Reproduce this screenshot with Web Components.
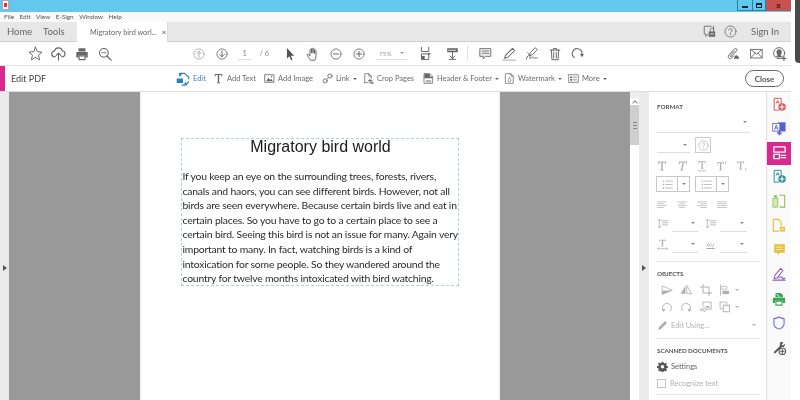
<!DOCTYPE html>
<html lang="en">
<head>
<meta charset="utf-8">
<title>Edit PDF</title>
<style>
html,body{margin:0;padding:0;background:#fff;overflow:hidden;width:800px;height:400px}
body{font-family:Lato,"Open Sans",sans-serif;color:#555}
</style>
</head>
<body>
<acro-app>
  <title-bar></title-bar>
  <menu-bar></menu-bar>
  <tab-bar></tab-bar>
  <main-toolbar></main-toolbar>
  <edit-bar></edit-bar>
  <work-area>
    <doc-view>
      <doc-page>
        <span slot="title">Migratory bird world</span>
        <span>If you keep an eye on the surrounding trees, forests, rivers,</span>
        <span>canals and haors, you can see different birds. However, not all</span>
        <span>birds are seen everywhere. Because certain birds live and eat in</span>
        <span>certain places. So you have to go to a certain place to see a</span>
        <span>certain bird. Seeing this bird is not an issue for many. Again very</span>
        <span>important to many. In fact, watching birds is a kind of</span>
        <span>intoxication for some people. So they wandered around the</span>
        <span>country for twelve months intoxicated with bird watching.</span>
      </doc-page>
    </doc-view>
    <format-panel></format-panel>
    <tool-rail></tool-rail>
  </work-area>
</acro-app>
<script>
const I = {
 star:'<path fill="none" stroke="currentColor" d="M8 1.200l2 4.800 5 .5-3.800 3.300 1.200 5L8 12.100l-4.400 2.700 1.200-5L1 6.500 6 6z"/>',
 upload:'<path fill="none" stroke="currentColor" stroke-width="1.200" d="M4.800 11.500H4a3 3 0 0 1-.4-6A4.500 4.500 0 0 1 12.200 5a3.300 3.300 0 0 1 0 6.500h-1M8 15V7.500M5.500 10 8 7.500l2.500 2.500"/>',
 print:'<path fill="currentColor" d="M4 1.500h8V5H4zM1.500 5.800h13v6.200H12V9.500H4V12H1.500z"/><path fill="none" stroke="currentColor" stroke-width="1.300" d="M4.600 10.200h6.800v4.200H4.600z"/>',
 search:'<circle cx="6.700" cy="6.700" r="5" fill="none" stroke="currentColor" stroke-width="1.200"/><path stroke="currentColor" stroke-width="1.500" d="M10.300 10.300l4.700 4.700"/><path stroke="currentColor" stroke-dasharray="1 1" d="M4.500 6.500h4.500"/>',
 up:'<circle cx="8" cy="8" r="6.800" fill="none" stroke="currentColor" stroke-width="1.100"/><path fill="none" stroke="currentColor" stroke-width="1.300" d="M8 12.200V4.500M5 7.300 8 4.300l3 3"/>',
 down:'<circle cx="8" cy="8" r="6.800" fill="none" stroke="currentColor" stroke-width="1.100"/><path fill="none" stroke="currentColor" stroke-width="1.300" d="M8 3.800v7.700M5 8.700l3 3 3-3"/>',
 pointer:'<path fill="currentColor" d="M4.500 1v12.500l2.800-2.800 1.900 4.300 1.700-.8-1.900-4.200h3.800z"/>',
 hand:'<path fill="none" stroke="currentColor" stroke-width="1.100" d="M5 14.800c-1-1.300-3-4-3.600-5.500-.4-1 1-1.600 1.700-.7l1.400 1.600V3.500c0-1.200 1.700-1.200 1.700 0V7 2.200c0-1.200 1.800-1.200 1.800 0V7 2.800c0-1.200 1.800-1.200 1.800 0v4.700V4.500c0-1.100 1.700-1.100 1.700 0V10c0 2-.5 3.500-1.300 4.800z"/>',
 minus:'<circle cx="8" cy="8" r="6.800" fill="none" stroke="currentColor" stroke-width="1.100"/><path stroke="currentColor" stroke-width="1.300" d="M4.500 8h7"/>',
 plus:'<circle cx="8" cy="8" r="6.800" fill="none" stroke="currentColor" stroke-width="1.100"/><path stroke="currentColor" stroke-width="1.300" d="M4.500 8h7M8 4.500v7"/>',
 fit:'<path fill="none" stroke="currentColor" stroke-width="1.200" d="M3 .5v5h9v-5M3 15V8.500h9V15z"/><path fill="currentColor" d="M3 11h4v4H3z"/>',
 scroll:'<path fill="currentColor" d="M1.500 1.500h13v5h-13z"/><path stroke="#fff" stroke-dasharray="1 1" d="M3 4h10"/><path fill="none" stroke="currentColor" stroke-width="1.200" d="M8 6.500v7.500M5 11l3 3 3-3M4 15.200h8"/>',
 comment:'<path fill="#eee" stroke="currentColor" stroke-width="1.100" d="M1.500 2h13v9.500H8L5.200 14.500v-3H1.500z"/><path stroke="currentColor" d="M4 5h8M4 7.800h8"/>',
 highlight:'<path fill="none" stroke="currentColor" stroke-width="1.200" d="M12 1.500l2.500 2.500L6.500 12 3 12.800 4 9.500z"/><path stroke="#bbb" stroke-width="1.600" d="M1 15h14"/>',
 sign:'<path fill="none" stroke="currentColor" stroke-width="1.100" d="M12 1l2 2-6 6-3 1 1-3zM1.500 14c1-4 3.500-6 4-4.500s-1 4 .5 3.500 1.500-2 2.500-1.500 1 1.500 5.500 1"/><path stroke="currentColor" d="M3 6.500l3 3"/>',
 trash:'<path fill="none" stroke="currentColor" stroke-width="1.100" d="M2.500 3.500h11M6 3.500V1.800h4v1.700M3.800 3.500l.7 11h7l.7-11M6.500 6v6.500M9.500 6v6.500"/>',
 rotate:'<path fill="none" stroke="currentColor" stroke-width="1.300" d="M4.200 13A6 6 0 1 1 13.500 9"/><path fill="currentColor" d="M11 8.500h5L13.500 12.500z"/>',
 attach:'<path fill="none" stroke="currentColor" stroke-width="1.200" d="M3 9l6-6.500c2-2 4.500.5 2.600 2.500L5.500 11.500c-1 1-2.400-.4-1.400-1.500l5-5M1.800 10.500c-1.500 3 1.800 5 3.700 3.200L8 11"/><path fill="currentColor" d="M8.500 14.500c0-2 1.500-4.500 3-4.500s3.500 2.500 3.500 4.500z"/>',
 mail:'<path fill="none" stroke="currentColor" stroke-width="1.100" d="M1 3h14v10.500H1zM1 3l7 5.800L15 3M1 13.500l5.200-6M15 13.500l-5.200-6"/>',
 user:'<circle cx="7" cy="7" r="6.300" fill="none" stroke="currentColor" stroke-width="1.100"/><path fill="currentColor" d="M7 2.500c2 0 3 1.300 3 3.200s-.8 3-1.500 3.600c.6.500 1.600.8 2.200 1.200A6 6 0 0 1 3.200 10.500c.6-.4 1.700-.7 2.300-1.200C4.800 8.700 4 7.600 4 5.700s1-3.200 3-3.200z"/><path stroke="currentColor" stroke-width="1.300" d="M12.500 11v4.500M10.300 13.200h4.500"/>',
 feedback:'<path fill="none" stroke="currentColor" stroke-width="1.100" d="M10 1.500H1.500V11h2v3L6 11.500M13 7V1.500"/><path fill="currentColor" d="M7 8h8v6.500H7z"/><path fill="none" stroke="currentColor" d="M9 8V5.800a2 2 0 0 1 4 0V8"/><path stroke="#e8e8e9" d="M9 11h4"/>',
 help:'<circle cx="8" cy="8" r="6.800" fill="none" stroke="currentColor" stroke-width="1"/><path fill="none" stroke="currentColor" stroke-width="1.100" d="M6 6.300a2 2 0 1 1 3 1.800C8.300 8.600 8 9 8 10"/><circle cx="8" cy="11.700" r=".7" fill="currentColor"/>',
 editb:'<path fill="none" stroke="currentColor" stroke-width="1.300" d="M5 1.500h5l4.500 4.500v2M14.500 11l-3 4H7"/><path fill="currentColor" d="M.8 7.500h7.200v5H.8zM3.500 .5 7 3 3.500 5.500zM8.500 14l3-3 1 3z"/>',
 textT:'<path fill="currentColor" d="M2.500 1.500h11v3.500h-1L12 3H9v10.500l1.500.5v.8h-5V14l1.500-.5V3H4l-.5 2h-1z"/>',
 image:'<path fill="none" stroke="currentColor" stroke-width="1.200" d="M1.500 2.500h13v11h-13z"/><path fill="currentColor" d="M3 12l3.500-5 2.500 3 1.500-1.500L13 12z"/><circle cx="11" cy="5.300" r="1.100" fill="currentColor"/>',
 link:'<circle cx="4.500" cy="11.500" r="3" fill="none" stroke="currentColor" stroke-width="1.300"/><circle cx="11.500" cy="4.500" r="3" fill="none" stroke="currentColor" stroke-width="1.300"/><path stroke="currentColor" stroke-width="1.300" d="M6.500 9.500l3-3"/>',
 crop:'<path fill="none" stroke="currentColor" stroke-width="1.100" d="M2.500 14V1h6l3.500 3.500V8M8.500 1v3.500H12M2.500 14h5"/><path fill="none" stroke="currentColor" stroke-width="1.300" d="M10 9v5.500h5M8 11h5.200v5"/>',
 header:'<path fill="none" stroke="currentColor" stroke-width="1.100" d="M2 1h8l4 4v10H2z"/><path fill="currentColor" d="M2 1h8v4h4v2.500H2z"/><path fill="currentColor" d="M4 10h8v1H4zM4 12.500h8v1H4z"/>',
 water:'<path fill="none" stroke="currentColor" stroke-width="1.100" d="M2.500 1h7.500l3.500 3.500V15h-11zM10 1v3.500h3.500"/><path fill="none" stroke="currentColor" d="M8 7c1.500 2 2 3 2 3.800a2 2 0 0 1-4 0C6 10 6.500 9 8 7z"/>',
 more:'<path fill="none" stroke="currentColor" stroke-width="1.100" d="M1 2.500h14v11H1z"/><path fill="currentColor" d="M3 5h3v2.300H3zM3 8.800h3v2.300H3zM7.500 5.500H13v1H7.500zM7.500 9.500H13v1H7.500z"/>',
 T:'<path fill="currentColor" d="M2.500 2h11v3.500h-.8L12 3.200H9v9.600l1.500.5v.7h-5v-.7l1.500-.5V3.200H4l-.7 2.300h-.8z"/>',
 Ti:'<path fill="currentColor" d="M4 2h10.500v3.500h-.8l-.2-2.300h-3l-2 9.600 1.500.5-.2.700h-5l.2-.7 1.700-.5 2-9.600H5.700l-1.200 2.300h-.8z"/>',
 Tu:'<path fill="currentColor" d="M3 1.500h10v3h-.7l-.6-2h-2.700v8.300l1.300.4v.6H6v-.6l1.300-.4V2.500H4.500l-.7 2H3zM2.500 14h11v1h-11z"/>',
 Ts:'<path fill="currentColor" d="M1.500 3h9v3h-.7L9.200 4H7v8.600l1.300.4v.6H4v-.6l1.300-.4V4H3L2.300 6h-.8zM12.500 1.500h1v4.500h-1z"/>',
 Tb:'<path fill="currentColor" d="M1.500 2h9v3h-.7L9.200 3H7v8.600l1.300.4v.6H4V12l1.300-.4V3H3l-.7 2h-.8zM12.500 10h1v4.500h-1z"/>',
 list:'<path fill="currentColor" d="M1 2h2v2H1zM1 7h2v2H1zM1 12h2v2H1z"/><path stroke="currentColor" stroke-width="1.200" d="M5 3h10M5 8h10M5 13h10"/>',
 al:'<path stroke="currentColor" stroke-width="1.100" d="M1 3h14M1 6h9M1 9h14M1 12h9"/>',
 ac:'<path stroke="currentColor" stroke-width="1.100" d="M1 3h14M4 6h8M1 9h14M4 12h8"/>',
 ar:'<path stroke="currentColor" stroke-width="1.100" d="M1 3h14M6 6h9M1 9h14M6 12h9"/>',
 aj:'<path stroke="currentColor" stroke-width="1.100" d="M1 3h14M1 6h14M1 9h14M1 12h14"/>',
 lsp:'<path fill="none" stroke="currentColor" stroke-width="1.100" d="M3.500 2v12M1.500 4l2-2.200L5.500 4M1.500 12l2 2.200 2-2.200"/><path stroke="currentColor" stroke-width="1.200" d="M7.500 4h8M7.500 7h8M7.500 10h8"/>',
 tw:'<path fill="currentColor" d="M3 1h10v2.500h-.7L12 2H9v8l1 .4v.6H6v-.6l1-.4V2H4l-.3 1.500H3z"/><path fill="none" stroke="currentColor" d="M1 14h14M2.500 12.500 1 14l1.500 1.500M13.500 12.500 15 14l-1.500 1.500"/>',
 flipH:'<path fill="none" stroke="currentColor" stroke-width="1.100" d="M1.500 3v11l13-5.500z"/><path fill="currentColor" d="M1.500 8.500h13L1.500 14z"/>',
 flipV:'<path fill="currentColor" d="M7.300 2v11H1z"/><path fill="none" stroke="currentColor" stroke-width="1.100" d="M9 2.500v10.500h6z"/>',
 cropo:'<path fill="none" stroke="currentColor" stroke-width="1.300" d="M4 .5V12h11.500M.5 4H12v11.500"/>',
 alignO:'<path stroke="currentColor" stroke-width="1.100" d="M2 1v14"/><path fill="none" stroke="currentColor" d="M4.500 3h6v4h-6z"/><path fill="currentColor" d="M4.500 9h9v4.500h-9z"/>',
 rotL:'<path fill="none" stroke="currentColor" stroke-width="1.200" d="M3.500 13A6 6 0 1 1 12.500 13"/><path fill="currentColor" d="M1 10.500h5L3.500 14.500z"/>',
 rotR:'<path fill="none" stroke="currentColor" stroke-width="1.200" d="M3.500 13A6 6 0 1 1 12.500 13"/><path fill="currentColor" d="M10 10.500h5L12.500 14.500z"/>',
 replace:'<path fill="none" stroke="currentColor" stroke-width="1.100" d="M4 1.500h11v9.500H8M4 1.500V7M1 10.500h4.500v-2l3 3-3 3v-2H1z"/><path fill="currentColor" d="M7 9l2.500-3.500 1.500 2 1-1L14 9z"/>',
 arr:'<path fill="none" stroke="currentColor" stroke-width="1.100" d="M1.500 1.500h9v3M1.500 1.500v9h3"/><path fill="currentColor" d="M5 5h9.500v10H5z"/><path fill="#fff" d="M6.300 6.300h7v7.400h-7z"/>',
 pencil:'<path fill="currentColor" d="M11.500 1.500l3 3L6 13l-4.500 1.500L3 10z"/>',
 gear:'<path fill="currentColor" fill-rule="evenodd" d="M6.700 1h2.600l.3 2 1.400.6 1.700-1.200 1.800 1.800-1.200 1.700.6 1.400 2 .3v2.600l-2 .3-.6 1.400 1.200 1.700-1.800 1.800-1.700-1.200-1.400.6-.3 2H6.700l-.3-2-1.400-.6-1.700 1.200-1.800-1.800 1.200-1.700-.6-1.400-2-.3V7.400l2-.3.6-1.400-1.200-1.700 1.800-1.800 1.700 1.200 1.400-.6zM8 5.800a2.500 2.500 0 1 0 0 5 2.500 2.500 0 0 0 0-5z"/>',
 r1:'<path fill="none" stroke="currentColor" stroke-width="1.100" d="M10.500 7.500V1.500h-8V15h5"/><path fill="none" stroke="currentColor" d="M5 7l1.500-3L8 7M5.500 6h2"/><circle cx="11.500" cy="11.500" r="4.300" fill="currentColor"/><path stroke="#fff" stroke-width="1.200" d="M9 11.500h5M11.500 9v5"/>',
 r2:'<path fill="currentColor" d="M7 1.500h8.500v10.500H7z"/><path fill="#fff" stroke="currentColor" d="M.8 3h8.200v8.500H.8z"/><path fill="none" stroke="currentColor" d="M3 9.500l1.900-5 1.900 5M3.700 8h2.500"/><path stroke="currentColor" stroke-width="1.500" d="M8.500 11v4M6.500 13.500l2 2 2-2" fill="none"/>',
 r3:'<path fill="none" stroke="currentColor" stroke-width="1.400" d="M2 2h12v5.500H2zM2 10h6v4.500H2z"/><path stroke="currentColor" stroke-width="1.400" d="M10 11h4.500M10 13.500h4.500"/>',
 r5:'<path fill="#d5eab5" stroke="currentColor" d="M1.500 5h5v10h-5z"/><path fill="none" stroke="currentColor" stroke-width="1.200" d="M9 1.500h5.500V15H9"/><path fill="currentColor" d="M2 1.500h4v2.500H2z"/>',
 r6:'<path fill="none" stroke="currentColor" stroke-width="1.300" d="M10.500 8.500V4.500L7.500 1.500h-6V15h6"/><path fill="currentColor" d="M9 10h6v5.500H9z"/><path stroke="#fff" d="M10.500 12.700h3"/>',
 r7:'<path fill="currentColor" d="M1.500 1.500h13v10.500H8.500L5.500 15v-3h-4z"/><path stroke="#fff" stroke-width=".8" d="M4 5h8M4 8h8"/>',
 r8:'<path fill="none" stroke="currentColor" stroke-width="1.200" d="M10 1.500l2.500 2.500-6.500 8.500-3.500.5.700-3.500zM1 15h14M8 12.500c2-1.500 3.500-2 3.500-.5s1 1.500 3 1"/>',
 r9:'<path fill="currentColor" d="M4 1h6l2.500 2.500V6H4zM1 6.500h14v6h-2.500V10h-9v2.500H1z"/><path fill="none" stroke="currentColor" stroke-width="1.300" d="M4.500 10.500h7v4.500h-7z"/><path stroke="#fff" d="M5.500 2.500l3 3"/>',
 r10:'<path fill="none" stroke="currentColor" stroke-width="1.200" d="M8 1.200c2 1.200 3.800 1.700 5.800 1.800v5.500c0 3-2.500 5.300-5.800 6.500-3.300-1.200-5.800-3.500-5.800-6.500V3c2-.1 3.800-.6 5.800-1.800z"/>',
 r11:'<path fill="currentColor" d="M10 1.200c1.500-.3 2.500 0 3 .5l-2 2 .5 1 1 .4 2-2c.4 1 .2 2.300-.8 3.100-.8.600-1.500.7-2.200.5L4 13.800c-1 1-2.600-.5-1.600-1.600L9.200 5.600c-.4-1.700-.3-3.600.8-4.400z"/><circle cx="11.800" cy="11.800" r="3.700" fill="#fafafa" stroke="currentColor" stroke-width="1.200"/><path stroke="currentColor" stroke-width="1.200" d="M9.800 11.800h4M11.800 9.800v4"/>'
};
const sheet = (s)=>`<style>${s}</style>`;
function def(name, css, html){
  customElements.define(name, class extends HTMLElement{
    connectedCallback(){
      if(this.shadowRoot) return;
      const r=this.attachShadow({mode:'open'});
      r.innerHTML=sheet(css)+(typeof html==='function'?html(this):html);
    }
  });
}
const caretCss = `.c{display:inline-block;width:0;height:0;border:2px solid transparent;border-top:2.500px solid currentColor;border-bottom:0;flex:none}`;

def('a-icon',`:host{display:inline-flex;flex:none;align-items:center;justify-content:center;line-height:0}svg{display:block}`,
 el=>{const s=el.getAttribute('size')||16;return `<svg width="${s}" height="${s}" viewBox="0 0 16 16" stroke-linecap="round" stroke-linejoin="round">${I[el.getAttribute('name')]||''}</svg>`});

def('acro-app',`:host{display:flex;flex-direction:column;width:800px;height:400px;position:relative;overflow:hidden;background:#fff;filter:blur(.3px)}
 .strip{position:absolute;right:0;top:0;width:5px;height:63px;background:#4a4a4a;border-bottom-left-radius:4px}
 ::slotted(*){width:791px}`,`<slot></slot><div class="strip"></div>`);

def('title-bar',`:host{display:flex;height:12px;background:#62c8ec;align-items:flex-start;justify-content:space-between}
 .logo{width:7px;height:10px;margin-left:2px;background:#fff;border:1px solid #c9a0a0;box-sizing:border-box;display:flex;align-items:center;justify-content:center}
 .logo i{width:3px;height:4px;background:#d23a3a;display:block}
 .b{display:flex;height:11px}
 .b span{display:flex;align-items:center;justify-content:center;box-sizing:border-box;border:1px solid #2c7fa6;border-top:0;height:11px}
 .min{width:16px}.min i{width:6px;height:2px;background:#123;margin-top:4px}
 .max{width:13px;border-left:0!important}.max i{width:6px;height:5px;border:1.500px solid #123;border-top-width:2px;box-sizing:border-box;display:block}
 .x{width:25px;background:#c75050;border:0!important;color:#3a1010;font:700 8px "Liberation Sans",sans-serif}`,
 `<div class="logo"><i></i></div><div class="b"><span class="min"><i></i></span><span class="max"><i></i></span><span class="x">x</span></div>`);

def('menu-bar',`:host{display:flex;height:10px;background:#f9f9fa;font:6.400px/10px Lato,sans-serif;color:#555;padding-left:4px;gap:5.500px;width:787px!important}
 span{flex:none}`,`<span>File</span><span>Edit</span><span>View</span><span>E-Sign</span><span>Window</span><span>Help</span>`);

def('tab-bar',`:host{display:flex;height:19px;background:#e7e7e8;align-items:center;font:9.500px Lato,sans-serif;color:#666;border-bottom:1px solid #d0d0d0}
 .h{margin-left:7px;width:36px}.t{width:34px}
 .tab{align-self:stretch;height:20px;width:91px;background:#fff;display:flex;align-items:center;padding-left:13px;box-sizing:border-box;font-size:7.300px;color:#666;white-space:nowrap;border-right:1px solid #ddd}
 .tab b{font-weight:400;margin-left:5px;font-size:8px;color:#555}
 .r{margin-left:auto;display:flex;align-items:center;color:#6a6a6a}
 .s{margin:0 12px 0 14px;font-size:9.500px;color:#666}`,
 `<span class="h">Home</span><span class="t">Tools</span><div class="tab">Migratory bird worl...<b>×</b></div>
 <div class="r"><a-icon name="feedback" size="13"></a-icon><a-icon name="help" size="13" style="margin-left:8px"></a-icon><span class="s">Sign In</span></div>`);

def('main-toolbar',`:host{display:flex;height:23px;align-items:center;background:#fff;border-bottom:1px solid #e4e4e4;color:#666;font:7.500px Lato,sans-serif;padding-left:24px;width:767px!important;white-space:nowrap}
 a-icon{width:23px}
 .pg{width:14px;text-align:center;color:#888;border-bottom:1px solid #ddd;line-height:11px;margin-left:5px}
 .zoom{width:32px;display:flex;justify-content:space-between;align-items:center;color:#999;border-bottom:1px solid #ddd;line-height:11px;margin-left:6px;padding:0 3px 0 3px;box-sizing:border-box;font-size:6.500px}
 .sep{width:1px;height:15px;background:#e0e0e0}
 .p6{width:11px;margin-left:8px;color:#888}
 ${caretCss}`,
 `<a-icon name="star" size="15"></a-icon><a-icon name="upload" size="15"></a-icon><a-icon name="print" size="14"></a-icon><a-icon name="search" size="14"></a-icon>
 <a-icon name="up" size="12" style="margin-left:71px;color:#aaa"></a-icon><a-icon name="down" size="12"></a-icon>
 <span class="pg">1</span><span class="p6">/ 6</span>
 <a-icon name="pointer" size="14" style="margin-left:8px;color:#555"></a-icon><a-icon name="hand" size="14"></a-icon><a-icon name="minus" size="12"></a-icon><a-icon name="plus" size="12"></a-icon>
 <span class="zoom">75%<i class="c"></i></span>
 <a-icon name="fit" size="13" style="margin-left:4px;width:22px;padding-left:7px;box-sizing:border-box"></a-icon><i class="c" style="margin-left:-6px"></i>
 <a-icon name="scroll" size="13" style="margin-left:10px"></a-icon>
 <span class="sep" style="margin-left:3px"></span>
 <a-icon name="comment" size="13" style="margin-left:6px"></a-icon><a-icon name="highlight" size="14"></a-icon><a-icon name="sign" size="14"></a-icon><a-icon name="trash" size="14"></a-icon><a-icon name="rotate" size="13"></a-icon>
 <a-icon name="attach" size="13" style="margin-left:133px"></a-icon><a-icon name="mail" size="13"></a-icon><a-icon name="user" size="14"></a-icon>`);

def('edit-item',`:host{display:flex;align-items:center;flex:none;gap:3px;font:7.500px Lato,sans-serif;color:#6a6a6a;white-space:nowrap}
 ${caretCss}`,
 el=>`<a-icon name="${el.getAttribute('icon')}" size="${el.getAttribute('size')||11}" ${el.hasAttribute('blue')?'style="color:#2d7fc4"':''}></a-icon><slot></slot>${el.hasAttribute('caret')?'<i class="c"></i>':''}`);

def('edit-bar',`:host{display:flex;height:25px;align-items:center;background:#fff;border-bottom:1px solid #ddd;color:#555;font:9px Lato,sans-serif}
 .pink{width:5px;align-self:stretch;background:#d82a8e}
 .t{width:171px;padding-left:6px;box-sizing:border-box;color:#444;font-size:9px}
 .close{margin-left:auto;margin-right:7px;width:39px;height:17px;box-sizing:border-box;border:1px solid #666;border-radius:9px;display:flex;align-items:center;justify-content:center;font:700 8px Lato,sans-serif;color:#555}`,
 `<div class="pink"></div><div class="t">Edit PDF</div>
 <edit-item icon="editb" size="14" blue style="width:37px;color:#3f86c0">Edit</edit-item>
 <edit-item icon="textT" style="width:51px">Add Text</edit-item>
 <edit-item icon="image" style="width:58px">Add Image</edit-item>
 <edit-item icon="link" caret style="width:41px">Link</edit-item>
 <edit-item icon="crop" style="width:60px">Crop Pages</edit-item>
 <edit-item icon="header" caret style="width:81px">Header &amp; Footer</edit-item>
 <edit-item icon="water" caret style="width:64px">Watermark</edit-item>
 <edit-item icon="more" caret>More</edit-item>
 <div class="close">Close</div>`);

def('work-area',`:host{display:flex;flex:1;min-height:0;background:#fff}`,`<slot></slot>`);

def('doc-view',`:host{display:flex;width:649px;flex:none;background:#ebebeb}
 .g{flex:none;width:9px;display:flex;align-items:center;justify-content:center}
 .a{width:0;height:0;border:3px solid transparent;border-left:4px solid #555;border-right:0;margin-top:43px}
 .canvas{width:621px;background:#999;display:flex;justify-content:center;flex:none}
 .sb{width:9px;background:#fff;flex:none;display:flex;flex-direction:column}
 .sb .top{height:6px;background:#ededed}
 .sb .btn{height:7px;display:flex;align-items:center;justify-content:center}
 .sb .btn i{width:3px;height:3px;border-left:1px solid #888;border-top:1px solid #888;transform:rotate(45deg);margin-top:2px}
 .sb .th{height:40px;background:#cfcfcf;display:flex;align-items:center;justify-content:center}
 .sb .th i{width:4px;height:5px;border-top:1px solid #888;border-bottom:1px solid #888;background:linear-gradient(#888,#888) center/100% 1px no-repeat}
 .g2{width:10px;flex:none;display:flex;align-items:center;justify-content:center}`,
 `<div class="g"><div class="a"></div></div><div class="canvas"><slot></slot></div><div class="sb"><div class="top"></div><div class="btn"><i></i></div><div class="th"><i></i></div></div><div class="g2"><div class="a"></div></div>`);

def('doc-page',`:host{display:block;width:360px;height:100%;background:#fff;box-sizing:border-box;padding-top:46px;padding-left:41px;box-shadow:inset 3px 0 2px -2px #eee,inset -3px 0 2px -2px #eee}
 .box{width:278px;height:148px;box-sizing:border-box;border:1px dashed #b8ced9}
 .title{font:16px/16px "Liberation Sans",Arial,sans-serif;color:#1a1a1a;text-align:center;height:26px;padding-left:2px}
 .body{padding-left:1px;font:10.400px/14.600px Lato,"Open Sans",sans-serif;letter-spacing:-.2px;color:#2a2a2a;white-space:nowrap;margin-top:4px}
 ::slotted(span:not([slot])){display:block}`,
 `<div class="box"><div class="title"><slot name="title"></slot></div><div class="body"><slot></slot></div></div>`);

def('sel-line',`:host{display:flex;flex:none;align-items:center;justify-content:flex-end;box-sizing:border-box;border-bottom:1px solid #ddd;color:#888;padding-right:3px}${caretCss}`,`<i class="c"></i>`);

def('format-panel',`:host{display:block;width:118px;flex:none;box-sizing:border-box;background:#fff;padding:8px 7px 0 8px;border-right:1px solid #e2e2e2;color:#b0b0b0;font:7.500px Lato,sans-serif;overflow:hidden}
 h4{margin:0;font:700 6.200px/12px Lato,sans-serif;color:#555;height:12px}
 .row{display:flex;align-items:center}
 .hr{height:1px;background:#e4e4e4}
 .q{width:16px;height:16px;border:1px solid #ccc;box-sizing:border-box;display:flex;align-items:center;justify-content:center;margin-left:5px}
 .ls{height:16px;box-sizing:border-box;width:34px;border:1px solid #c8c8c8;display:flex;align-items:center;flex:none}
 .ls a-icon{width:20px}.ls span{border-left:1px solid #c8c8c8;flex:1;align-self:stretch;display:flex;align-items:center;justify-content:center;color:#888}
 ${caretCss}
 .tr a-icon{width:20px}
 .ob a-icon{width:19.500px}`,
 `<h4 style="line-height:13px">FORMAT</h4>
 <sel-line style="width:93px;height:21px"></sel-line>
 <div class="row" style="margin-top:4px;align-items:flex-end"><sel-line style="width:33px;height:16px"></sel-line><div class="q"><a-icon name="help" size="11"></a-icon></div></div>
 <div class="row tr" style="height:16px;margin-top:5px;margin-left:-5px"><a-icon name="T" size="12"></a-icon><a-icon name="Ti" size="12"></a-icon><a-icon name="Tu" size="12"></a-icon><a-icon name="Ts" size="12"></a-icon><a-icon name="Tb" size="12"></a-icon></div>
 <div class="row" style="margin-top:2px;gap:5px;margin-left:-1px"><div class="ls"><a-icon name="list" size="11"></a-icon><span><i class="c"></i></span></div><div class="ls"><a-icon name="list" size="11"></a-icon><span><i class="c"></i></span></div></div>
 <div class="row tr" style="height:16px;margin-top:5px;margin-left:-5px"><a-icon name="al" size="10"></a-icon><a-icon name="ac" size="10"></a-icon><a-icon name="ar" size="10"></a-icon><a-icon name="aj" size="10"></a-icon></div>
 <div class="row" style="height:17px;margin-top:2px"><a-icon name="lsp" size="11"></a-icon><sel-line style="width:26px;height:17px;margin-left:4px"></sel-line><a-icon name="lsp" size="11" style="margin-left:7px"></a-icon><sel-line style="width:27px;height:17px;margin-left:4px"></sel-line></div>
 <div class="row" style="height:18px;margin-top:3px"><a-icon name="tw" size="11"></a-icon><sel-line style="width:26px;height:18px;margin-left:4px"></sel-line><span style="width:11px;margin-left:7px;font-size:6.500px;text-decoration:underline;text-align:center;color:#aaa">AV</span><sel-line style="width:27px;height:18px;margin-left:4px"></sel-line></div>
 <div class="hr" style="margin-top:8px"></div>
 <h4 style="margin-top:6px">OBJECTS</h4>
 <div class="row ob" style="height:16px;margin-top:2px"><a-icon name="flipH" size="12"></a-icon><a-icon name="flipV" size="12"></a-icon><a-icon name="cropo" size="12"></a-icon><a-icon name="alignO" size="12"></a-icon><i class="c"></i></div>
 <div class="row ob" style="height:16px;margin-top:1px"><a-icon name="rotL" size="12"></a-icon><a-icon name="rotR" size="12"></a-icon><a-icon name="replace" size="12"></a-icon><a-icon name="arr" size="12"></a-icon><i class="c"></i></div>
 <div class="row" style="height:16px;margin-top:2px"><a-icon name="pencil" size="11"></a-icon><span style="margin-left:3px;flex:1">Edit Using...</span><i class="c" style="margin-right:3px"></i></div>
 <div class="hr" style="margin-top:5px"></div>
 <h4 style="margin-top:6px;white-space:nowrap">SCANNED DOCUMENTS</h4>
 <div class="row" style="height:16px;margin-top:1px;color:#666"><a-icon name="gear" size="11" style="color:#555"></a-icon><span style="margin-left:3px">Settings</span></div>
 <div class="row" style="height:12px;margin-top:3px"><span style="width:9px;height:9px;border:1px solid #c4c4c4;box-sizing:border-box;margin-right:4px"></span>Recognize text</div>
 <div class="hr" style="margin-top:5px"></div>`);

def('tool-rail',`:host{display:flex;flex-direction:column;width:24px;flex:none;background:#fafafa;box-sizing:border-box}
 a-icon{height:24.500px;width:24px;box-sizing:border-box;padding-bottom:2px}
 .on{background:#d82a8e;color:#fff;height:23.500px;padding-bottom:1px}`,
 `<a-icon name="r1" size="14" style="color:#d9555a;height:25px"></a-icon><a-icon name="r2" size="14" style="color:#5a5fd0"></a-icon><a-icon class="on" name="r3" size="15"></a-icon><a-icon name="r1" size="14" style="color:#2a8f96"></a-icon><a-icon name="r5" size="14" style="color:#8cc152"></a-icon><a-icon name="r6" size="14" style="color:#e2c03c"></a-icon><a-icon name="r7" size="13" style="color:#e2c03c"></a-icon><a-icon name="r8" size="14" style="color:#8a5cc8"></a-icon><a-icon name="r9" size="14" style="color:#3aa655"></a-icon><a-icon name="r10" size="14" style="color:#6a6ad0"></a-icon><a-icon name="r11" size="14" style="color:#555"></a-icon>`);
</script>
</body>
</html>
